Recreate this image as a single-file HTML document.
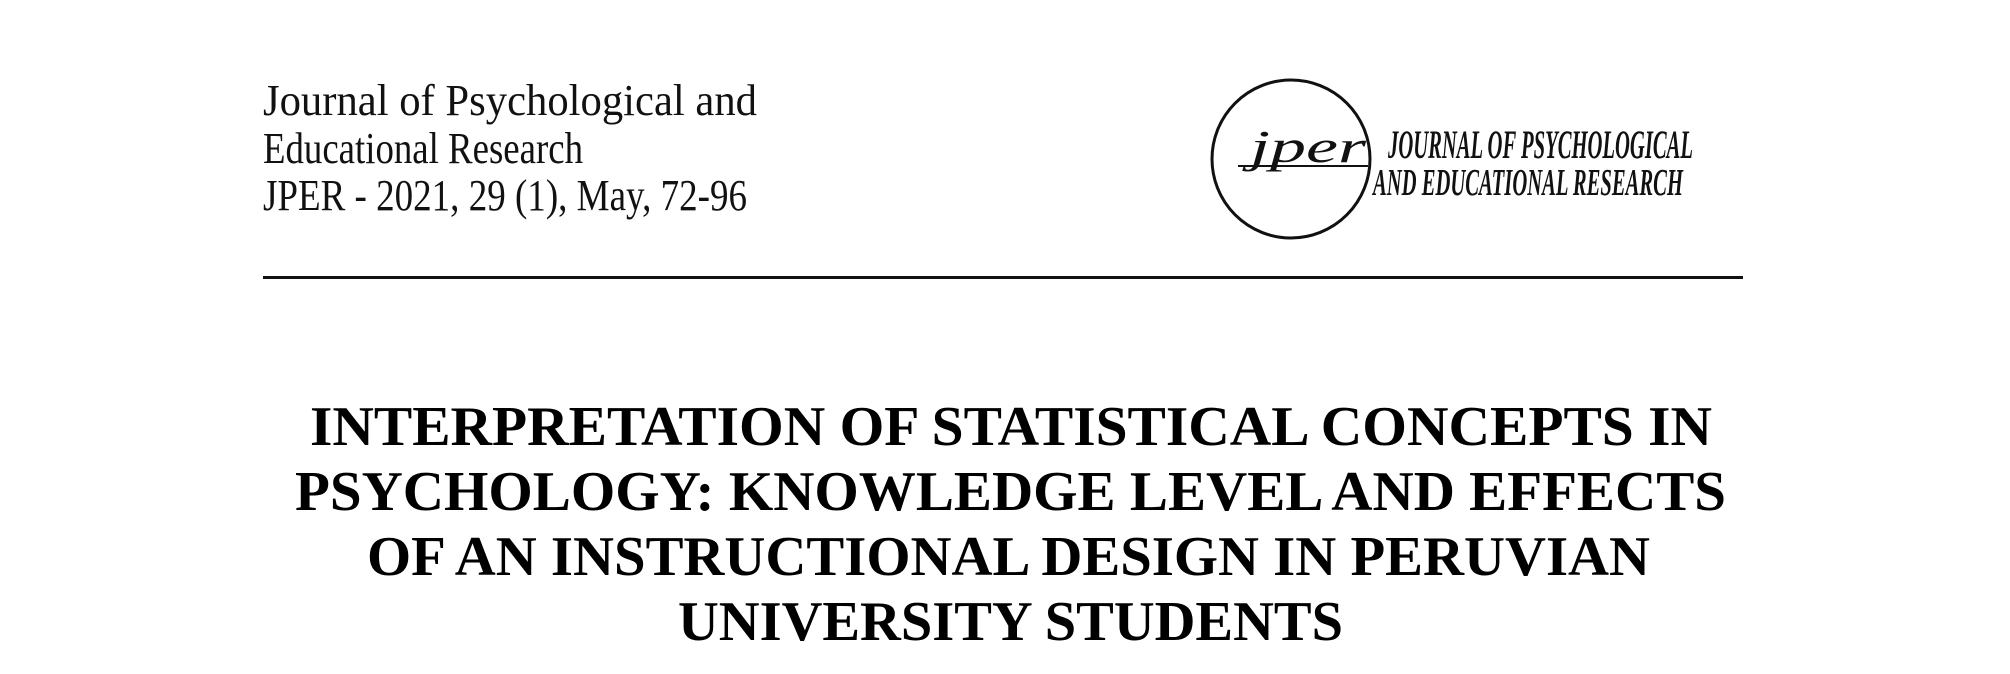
<!DOCTYPE html>
<html><head><style>
html,body{margin:0;padding:0;background:#fff;}
svg{display:block;}
</style></head><body>
<svg width="2010" height="674" viewBox="0 0 2010 674" xmlns="http://www.w3.org/2000/svg">
<g font-family="Liberation Serif, serif" fill="#111">
<text x="263" y="115" font-size="44" textLength="494" lengthAdjust="spacingAndGlyphs">Journal of Psychological and</text>
<text x="263" y="163" font-size="44" textLength="320" lengthAdjust="spacingAndGlyphs">Educational Research</text>
<text x="263" y="210" font-size="44" textLength="484" lengthAdjust="spacingAndGlyphs">JPER - 2021, 29 (1), May, 72-96</text>
</g>
<rect x="263" y="276" width="1480" height="3" fill="#111"/>
<circle cx="1291" cy="159" r="79" fill="none" stroke="#111" stroke-width="3"/>
<text x="1250" y="162" font-family="Liberation Serif, serif" font-style="italic" font-size="46" fill="#111" textLength="116" lengthAdjust="spacingAndGlyphs">jper</text>
<line x1="1238" y1="166" x2="1368" y2="166" stroke="#111" stroke-width="2"/>
<g font-family="Liberation Serif, serif" font-style="italic" font-weight="bold" fill="#111">
<text x="1388" y="158" font-size="40" textLength="305" lengthAdjust="spacingAndGlyphs">JOURNAL OF PSYCHOLOGICAL</text>
<text x="1373" y="195" font-size="38" textLength="310" lengthAdjust="spacingAndGlyphs">AND EDUCATIONAL RESEARCH</text>
</g>
<g font-family="Liberation Serif, serif" font-weight="bold" fill="#000" font-size="56">
<text x="310" y="445" textLength="1402" lengthAdjust="spacingAndGlyphs">INTERPRETATION OF STATISTICAL CONCEPTS IN</text>
<text x="295" y="510" textLength="1431" lengthAdjust="spacingAndGlyphs">PSYCHOLOGY: KNOWLEDGE LEVEL AND EFFECTS</text>
<text x="367" y="575" textLength="1283" lengthAdjust="spacingAndGlyphs">OF AN INSTRUCTIONAL DESIGN IN PERUVIAN</text>
<text x="678" y="640" textLength="665" lengthAdjust="spacingAndGlyphs">UNIVERSITY STUDENTS</text>
</g>
</svg>
</body></html>
